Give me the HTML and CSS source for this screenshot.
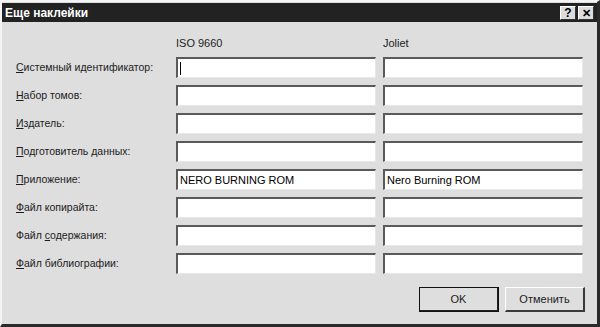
FILE: index.html
```html
<!DOCTYPE html>
<html>
<head>
  <title>Еще наклейки</title>
  <link rel="stylesheet" href="styles.css">
</head>
<body>
  <div class="window">
    <div class="titlebar">
      <span class="title">Еще наклейки</span>
      <span class="tbtn">?</span>
      <span class="tbtn close">✕</span>
    </div>
    <div class="content">
      <div class="grid">
        <span></span>
        <span class="colhead">ISO 9660</span>
        <span class="colhead">Joliet</span>

        <label><u>С</u>истемный идентификатор:</label>
        <div class="field focus"><span class="caret"></span></div>
        <div class="field"></div>

        <label><u>Н</u>абор томов:</label>
        <div class="field"></div>
        <div class="field"></div>

        <label><u>И</u>здатель:</label>
        <div class="field"></div>
        <div class="field"></div>

        <label><u>П</u>одготовитель данных:</label>
        <div class="field"></div>
        <div class="field"></div>

        <label><u>П</u>риложение:</label>
        <div class="field">NERO BURNING ROM</div>
        <div class="field">Nero Burning ROM</div>

        <label><u>Ф</u>айл копирайта:</label>
        <div class="field"></div>
        <div class="field"></div>

        <label>Файл <u>с</u>одержания:</label>
        <div class="field"></div>
        <div class="field"></div>

        <label><u>Ф</u>айл библиографии:</label>
        <div class="field"></div>
        <div class="field"></div>
      </div>
      <div class="buttons">
        <button class="default">OK</button>
        <button>Отменить</button>
      </div>
    </div>
  </div>
</body>
</html>
```

FILE: styles.css
```css
body { margin: 0; background: #dedede; font-family: "Liberation Sans", Arial, sans-serif; font-size: 11px; color: #1c1c1c; }
.window { width: 600px; height: 327px; box-sizing: border-box; background: #dedede; border-top: 2px solid #f4f4f4; border-left: 2px solid #f4f4f4; border-right: 3px solid #2a2a2a; border-bottom: 3px solid #2a2a2a; display: flex; flex-direction: column; }
.titlebar { height: 19px; margin-top: 1px; background: #222; color: #fff; display: flex; align-items: center; padding: 0 3px 0 3px; gap: 2px; }
.title { flex: 1; font-weight: bold; font-size: 12px; }
.tbtn { width: 16px; height: 14px; box-sizing: border-box; background: #dcdcdc; color: #000; font-weight: bold; font-size: 12px; line-height: 12px; text-align: center; border-top: 1px solid #fff; border-left: 1px solid #fff; border-right: 1px solid #333; border-bottom: 1px solid #333; }
.tbtn.close { font-size: 11px; }
.content { flex: 1; padding: 15px 12px 0 14px; display: flex; flex-direction: column; }
.grid { display: grid; grid-template-columns: 153px 200px 200px; column-gap: 7px; row-gap: 7px; grid-auto-rows: 21px; grid-template-rows: 13px; }
.colhead { line-height: 13px; }
label { display: block; line-height: 21px; white-space: nowrap; font-size: 10.5px; }
.field { box-sizing: border-box; height: 21px; background: #fff; border-top: 2px solid #5a5a5a; border-left: 2px solid #5a5a5a; border-right: 1px solid #e8e8e8; border-bottom: 1px solid #e8e8e8; padding: 0 2px; display: flex; align-items: center; color: #000; white-space: nowrap; }
.caret { width: 1px; height: 13px; background: #000; }
.buttons { display: flex; justify-content: flex-end; gap: 6px; margin-top: 13px; }
button { width: 80px; height: 25px; box-sizing: border-box; background: #dedede; font-family: inherit; font-size: 11px; color: #1c1c1c; border-top: 1px solid #fff; border-left: 1px solid #fff; border-right: 2px solid #3a3a3a; border-bottom: 2px solid #3a3a3a; padding: 0; }
button.default { outline: 1px solid #111; outline-offset: -1px; border-right-color: #222; border-bottom-color: #222; }
```
